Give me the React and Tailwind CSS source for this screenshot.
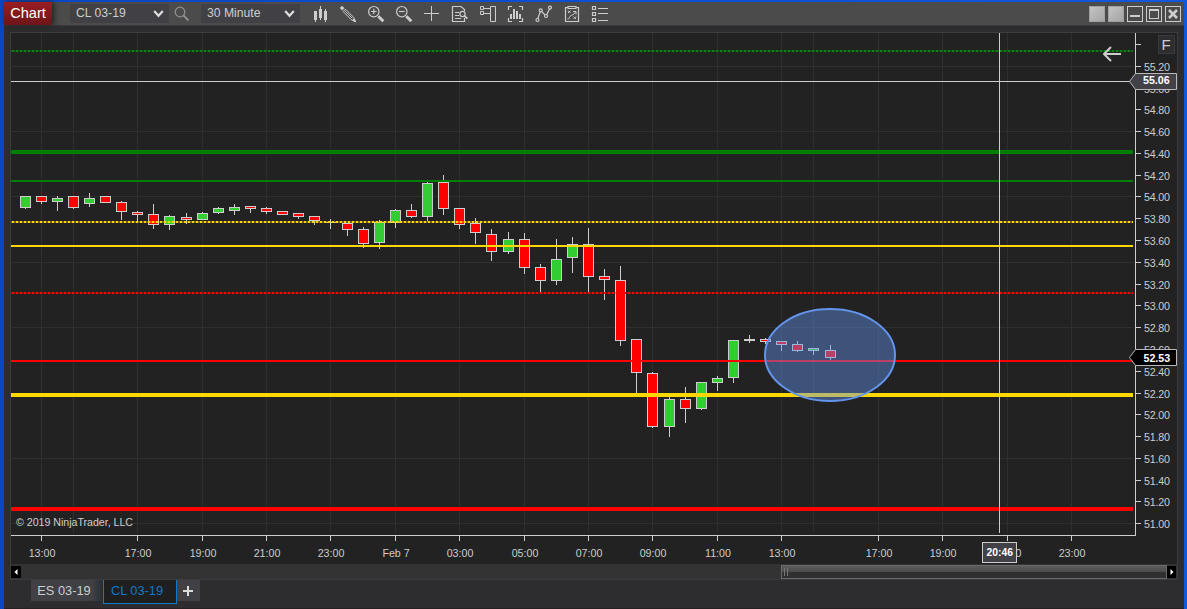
import React from 'react'

// [left, body top, body bottom, high, low, up?]
const CANDLES = [
  [20, 196, 208, 196, 209, 1],
  [36, 196, 202, 196, 204, 0],
  [52, 198, 202, 196, 211, 1],
  [68, 196, 208, 196, 209, 0],
  [84, 198, 204, 193, 207, 1],
  [100, 196, 203, 196, 203, 0],
  [116, 202, 212, 201, 220, 0],
  [132, 212, 215, 211, 223, 0],
  [148, 214, 225, 204, 229, 0],
  [164, 216, 225, 215, 230, 1],
  [181, 217, 220, 213, 224, 0],
  [197, 213, 220, 212, 220, 1],
  [213, 208, 213, 207, 214, 1],
  [229, 207, 211, 204, 215, 1],
  [245, 206, 209, 206, 213, 0],
  [261, 208, 212, 207, 214, 0],
  [277, 211, 215, 211, 215, 0],
  [293, 213, 217, 213, 219, 0],
  [309, 216, 221, 216, 225, 0],
  [325, 222, 223, 219, 229, 0],
  [342, 223, 230, 223, 236, 0],
  [358, 229, 244, 227, 248, 0],
  [374, 222, 243, 220, 249, 1],
  [390, 210, 223, 209, 228, 1],
  [406, 210, 217, 204, 218, 0],
  [422, 183, 217, 182, 221, 1],
  [438, 182, 209, 175, 215, 0],
  [454, 208, 225, 208, 229, 0],
  [470, 223, 233, 218, 244, 0],
  [486, 234, 252, 229, 261, 0],
  [503, 239, 252, 232, 254, 1],
  [519, 239, 268, 233, 274, 0],
  [535, 267, 281, 264, 294, 0],
  [551, 259, 281, 239, 285, 1],
  [567, 244, 258, 237, 273, 1],
  [583, 244, 277, 228, 292, 0],
  [599, 276, 280, 269, 300, 0],
  [615, 280, 341, 266, 346, 0],
  [631, 339, 373, 339, 393, 0],
  [647, 373, 427, 372, 428, 0],
  [664, 399, 427, 397, 437, 1],
  [680, 399, 409, 387, 423, 0],
  [696, 382, 409, 382, 410, 1],
  [712, 378, 383, 376, 391, 1],
  [728, 340, 378, 340, 383, 1],
  [744, 339, 341, 335, 343, 0],
  [760, 339, 342, 338, 344, 0],
  [776, 341, 345, 341, 351, 0],
  [792, 344, 351, 341, 352, 0],
  [808, 348, 351, 348, 355, 1],
  [825, 350, 358, 345, 360, 0]
]

// [y, thickness, color, dotted?]
const LEVELS = [
  [50, 2, '#0a840a', 1],
  [150, 4, '#008000', 0],
  [180, 2, '#008000', 0],
  [221, 2, '#ffd700', 1],
  [245, 2, '#ffd700', 0],
  [292, 2, '#ff0000', 1],
  [360, 2, '#ff0000', 0],
  [393, 4, '#ffd700', 0],
  [507, 4, '#ff0000', 0]
]

const GRID_X = [41, 73, 137, 202, 266, 330, 395, 459, 524, 588, 652, 717, 781, 813, 878, 942, 1007, 1071]
const GRID_Y = [66, 131, 196, 262, 327, 393, 458, 523]

const TIMES = [
  [41, '13:00'], [137, '17:00'], [202, '19:00'], [266, '21:00'], [330, '23:00'], [395, 'Feb 7'],
  [459, '03:00'], [524, '05:00'], [588, '07:00'], [652, '09:00'], [717, '11:00'], [781, '13:00'],
  [878, '17:00'], [942, '19:00'], [1007, '21:00'], [1071, '23:00']
]

const PRICES = Array.from({ length: 22 }, (_, i) => ({
  label: (55.2 - i * 0.2).toFixed(2),
  y: Math.round(65.8 + i * 21.78)
}))

function Candle({ data }) {
  const [x, top, bottom, high, low, up] = data
  const h = bottom - top
  return (
    <g>
      <rect x={x + 5} y={high} width="1" height={low - high} fill="#cdcdcd" />
      <rect x={x} y={top} width="11" height={h} fill="#cdcdcd" />
      {h > 2 && (
        <rect x={x + 1} y={top + 1} width="9" height={h - 2} fill={up ? '#32cd32' : '#ff0000'} />
      )}
    </g>
  )
}

function PriceChart() {
  return (
    <svg
      width="1166"
      height="531"
      viewBox="11 33 1166 531"
      className="block shrink-0 font-['Liberation_Sans',Arial,sans-serif] text-[10.67px]"
    >
      <rect x="11" y="33" width="1166" height="531" fill="#222222" />

      <g fill="#2f2f30">
        {GRID_X.map(x => <rect key={x} x={x} y="33" width="1" height="500" />)}
        {GRID_Y.map(y => <rect key={y} x="12" y={y} width="1121" height="1" />)}
      </g>

      {CANDLES.map(c => <Candle key={c[0]} data={c} />)}

      {LEVELS.map(([y, h, color, dotted]) =>
        dotted ? (
          <g key={y}>
            <rect x="11" y={y} width="1122" height={h} fill={color} opacity="0.36" />
            <line x1="12" x2="1133" y1={y + 1} y2={y + 1} stroke={color} strokeWidth={h} strokeDasharray="2 2" />
          </g>
        ) : (
          <rect key={y} x="11" y={y} width="1122" height={h} fill={color} />
        )
      )}

      <ellipse cx="830" cy="355" rx="65" ry="46" fill="#6495ed" fillOpacity="0.43" stroke="#6495ed" strokeWidth="2" />

      {/* axes */}
      <g fill="#cdcdcd">
        <rect x="1135" y="33" width="1" height="503" />
        <rect x="11" y="535" width="1125" height="1" />
        <rect x="1136" y="44" width="5" height="1" />
        {PRICES.map(p => <rect key={p.label} x="1136" y={p.y} width="5" height="1" />)}
        {TIMES.map(([x]) => <rect key={x} x={x} y="536" width="1" height="5" />)}
      </g>
      <g fill="#cdcdcd">
        {PRICES.map(p => <text key={p.label} x="1144" y={p.y + 5} textLength="26">{p.label}</text>)}
        {TIMES.map(([x, t]) => <text key={x} x={x + 1} y="557" textAnchor="middle">{t}</text>)}
        <text x="16" y="526" textLength="117">© 2019 NinjaTrader, LLC</text>
      </g>

      {/* crosshair */}
      <g fill="#cdcdcd">
        <rect x="11" y="81" width="1119" height="1" />
        <rect x="999" y="33" width="1" height="500" />
      </g>

      {/* price markers */}
      <path d="M1129.5 81.5 L1135.5 73.5 H1176.5 V89.5 H1135.5 Z" fill="#424147" stroke="#b8b8b8" />
      <text x="1143" y="84" fill="#ffffff" className="font-bold">55.06</text>
      <path d="M1129.5 357.5 L1135.5 349.5 H1176.5 V365.5 H1135.5 Z" fill="#000000" stroke="#b8b8b8" />
      <text x="1143.5" y="362" fill="#ffffff" className="font-bold">52.53</text>
      <rect x="982.5" y="542.5" width="34" height="20" fill="#424147" stroke="#cdcdcd" />
      <text x="986.5" y="556" textLength="26.5" lengthAdjust="spacingAndGlyphs" fill="#ffffff" className="font-bold">20:46</text>

      <path d="M1121 54H1104M1111 47L1104 54L1111 61" fill="none" stroke="#cdcdcd" strokeWidth="2" />
      <rect x="1158.5" y="35.5" width="16" height="18" fill="#2d2d2f" stroke="#3a3a3c" />
      <text x="1161.5" y="50" fill="#cdcdcd" className="text-[15px]">F</text>
    </svg>
  )
}

function Icon({ children }) {
  return (
    <svg width="18" height="18" viewBox="0 0 18 18" fill="none" stroke="#cdcdcd" strokeWidth="1.2" className="shrink-0">
      {children}
    </svg>
  )
}

function ToolIcons() {
  return (
    <div className="ml-[11px] flex items-center gap-[10px]">
      <Icon>
        <path d="M3 6h3v9H3zM8 4h3v9H8zM13 6h3v9h-3zM4 15h1v2H4zM9 1h1v14H9zM14 4h1v13h-1z" fill="#cdcdcd" stroke="none" />
      </Icon>
      <Icon>
        <path d="M1 3L3 1L5.2 3.200L3.200 5.200Z" fill="#cdcdcd" strokeWidth="0.5" />
        <path d="M4.200 6.500L6.500 4.200L14.600 12.300L16.300 16.500L12.200 14.700Z" strokeWidth="1" />
        <path d="M5.500 5.500L13.200 13.200" strokeWidth="0.900" />
        <path d="M13.800 15.300L15.300 13.800L16.600 16.800Z" fill="#cdcdcd" strokeWidth="1" />
      </Icon>
      <Icon>
        <circle cx="6.8" cy="6.7" r="5.2" />
        <path d="M4 6.5h5.6M6.8 3.7v5.6" />
        <path d="M11.3 11.2L16.3 16.2" strokeWidth="3" />
      </Icon>
      <Icon>
        <circle cx="6.8" cy="6.7" r="5.2" />
        <path d="M4 6.5h5.6" />
        <path d="M11.3 11.2L16.3 16.2" strokeWidth="3" />
      </Icon>
      <Icon>
        <path d="M1 8.5h15M8.5 1v15" strokeWidth="1" />
      </Icon>
      <Icon>
        <path d="M13.5 6V4.5L10 1.5H1.5V16.5H13.5V13" />
        <path d="M4 7.500h4M4 10.500h4M4 13.500h6" strokeWidth="1" />
        <circle cx="11.5" cy="9" r="2.6" />
        <path d="M13.4 10.9L16.4 13.7" strokeWidth="1.8" />
      </Icon>
      <Icon>
        <path d="M1.500 1.500h3v3h-3zM1.500 6.500h3v3h-3zM11.500 1.500h5v15h-5zM4.500 3.500h7M4.500 8.500h7" strokeWidth="1" />
      </Icon>
      <Icon>
        <path d="M1.500 5V1.500H5M12 1.500h3.500V5M1.500 13v3.500H5M12 16.500h3.500V13" />
        <path d="M3 9h2v5H3zM6 4h2v10H6zM9 6h2v8H9zM12 9h2v5h-2z" fill="#cdcdcd" stroke="none" />
      </Icon>
      <Icon>
        <path d="M2.500 14.500L5.700 5.500L11 11L15 3" />
        <circle cx="2.500" cy="15" r="1.500" fill="#4b4b4b" />
        <circle cx="5.700" cy="5.300" r="1.500" fill="#4b4b4b" />
        <circle cx="11" cy="11" r="1.500" fill="#4b4b4b" />
        <circle cx="15" cy="2.600" r="1.500" fill="#4b4b4b" />
      </Icon>
      <Icon>
        <path d="M4.500 2.500h-2v14h13v-14h-2M5 1.500h8v2H5z" />
        <path d="M5 5.500l2.500 2.500M7.500 5.500L5 8M10.500 11.500l2.500 2.500M13 11.500L10.500 14M4.500 14c3 0 1-3 4.500-4 2-.6 2.500-1.500 3.500-3.500M10 6.500h3v3" strokeWidth="1" />
      </Icon>
      <Icon>
        <path d="M1.500 1.500h3v3h-3zM1.500 7.500h3v3h-3zM1.500 13.500h3v3h-3z" />
        <path d="M7 3.500h10M7 8.500h10M7 15.500h10" strokeWidth="1" />
      </Icon>
    </div>
  )
}

function Picker({ label }) {
  return (
    <div className="flex h-[19px] w-[99px] items-center justify-between bg-[#404045] pr-[5px] pl-[6px] text-[12.2px] text-[#cdcdcd]">
      <span>{label}</span>
      <svg width="11" height="8" viewBox="0 0 11 8" fill="none" stroke="#dcdcdc" strokeWidth="2.2">
        <path d="M1.200 1L5.500 5.800L9.800 1" />
      </svg>
    </div>
  )
}

function WindowButton({ children }) {
  return (
    <button className="flex size-4 items-center justify-center border border-[#cdcdcd]">{children}</button>
  )
}

function TitleBar() {
  return (
    <div className="flex h-[24px] shrink-0 items-center border-b border-[#39393b] bg-[#4b4b4b]">
      <div className="flex h-[23px] w-[48px] items-center justify-center bg-linear-to-b from-[#9b1c22] to-[#6d1519] pt-px text-[14.600px] text-white shadow-[2px_0_5px_#222]">
        Chart
      </div>
      <div className="ml-[18px]"><Picker label="CL 03-19" /></div>
      <svg width="16" height="16" viewBox="0 0 16 16" fill="none" stroke="#8e8e8e" strokeWidth="1.300" className="mr-[11px] ml-[5px]">
        <circle cx="6" cy="6" r="4.800" />
        <path d="M9.500 9.500L14.500 14.500" strokeWidth="1.800" />
      </svg>
      <Picker label="30 Minute" />
      <ToolIcons />
      <div className="mr-[3px] ml-auto flex gap-[3px]">
        <div className="size-4 border border-[#a0a0a0] bg-linear-to-br from-[#c4c4c4] to-[#a4a4a4]" />
        <div className="size-4 border border-[#a0a0a0] bg-linear-to-br from-[#c4c4c4] to-[#a4a4a4]" />
        <WindowButton>
          <span className="mt-[5px] h-[2px] w-[10px] bg-[#cdcdcd]" />
        </WindowButton>
        <WindowButton>
          <span className="h-[10px] w-[10px] border border-t-2 border-[#cdcdcd]" />
        </WindowButton>
        <WindowButton>
          <svg width="10" height="10" viewBox="0 0 10 10" stroke="#cdcdcd" strokeWidth="2.600">
            <path d="M1 1L9 9M9 1L1 9" />
          </svg>
        </WindowButton>
      </div>
    </div>
  )
}

function ScrollBar() {
  return (
    <div className="flex h-[15px] shrink-0 items-center bg-[#333333]">
      <button className="flex h-[12px] w-[10px] items-center justify-center bg-black">
        <svg width="4" height="6" viewBox="0 0 4 6" fill="#ffffff"><path d="M3.500 0V6L0.500 3Z" /></svg>
      </button>
      <div className="ml-auto flex h-[14px] w-[386px] items-center gap-[2px] border border-[#696969] bg-linear-to-b from-[#5c5c5c] from-0% via-[#4b4b4b] via-50% to-[#303030] to-50% pl-[2px]">
        <span className="h-[8px] w-px bg-[#777]" />
        <span className="h-[8px] w-px bg-[#777]" />
      </div>
      <button className="mr-px flex h-[12px] w-[9px] items-center justify-center bg-black">
        <svg width="4" height="6" viewBox="0 0 4 6" fill="#ffffff"><path d="M0.500 0V6L3.500 3Z" /></svg>
      </button>
    </div>
  )
}

function Tabs() {
  return (
    <div className="ml-[27px] flex items-start text-[12.800px]">
      <button className="h-[21px] w-[72px] bg-linear-to-r from-[#404045] from-85% to-[#2d2d2f] pr-[6px] whitespace-nowrap text-[#cdcdcd]">ES 03-19</button>
      <button className="h-[24px] w-[74px] border border-t-0 border-[#0f7ac8] bg-[#1f1f20] pr-[6px] pb-[2px] text-[#0f7ac8]">
        CL 03-19
      </button>
      <button className="flex h-[21px] w-[23px] items-center justify-center bg-[#404045] pr-px">
        <svg width="10" height="10" viewBox="0 0 10 10" fill="#dcdcdc"><path d="M4 0h2v4h4v2H6v4H4V6H0V4h4z" /></svg>
      </button>
    </div>
  )
}

export default function App() {
  return (
    <div className="h-[609px] w-[1187px] overflow-hidden bg-linear-to-r from-[#0846c4] to-[#1058dc] pt-[2px] pr-[3px] pl-[4px] font-['Liberation_Sans',Arial,sans-serif]">
      <div className="flex h-[607px] flex-col border-b border-[#241f20] bg-[#2d2d2f]">
        <TitleBar />
        <div className="mt-[6px] ml-[6px] flex w-[1168px] shrink-0 flex-col border border-[#3c3c3f]">
          <PriceChart />
          <ScrollBar />
        </div>
        <Tabs />
      </div>
    </div>
  )
}
